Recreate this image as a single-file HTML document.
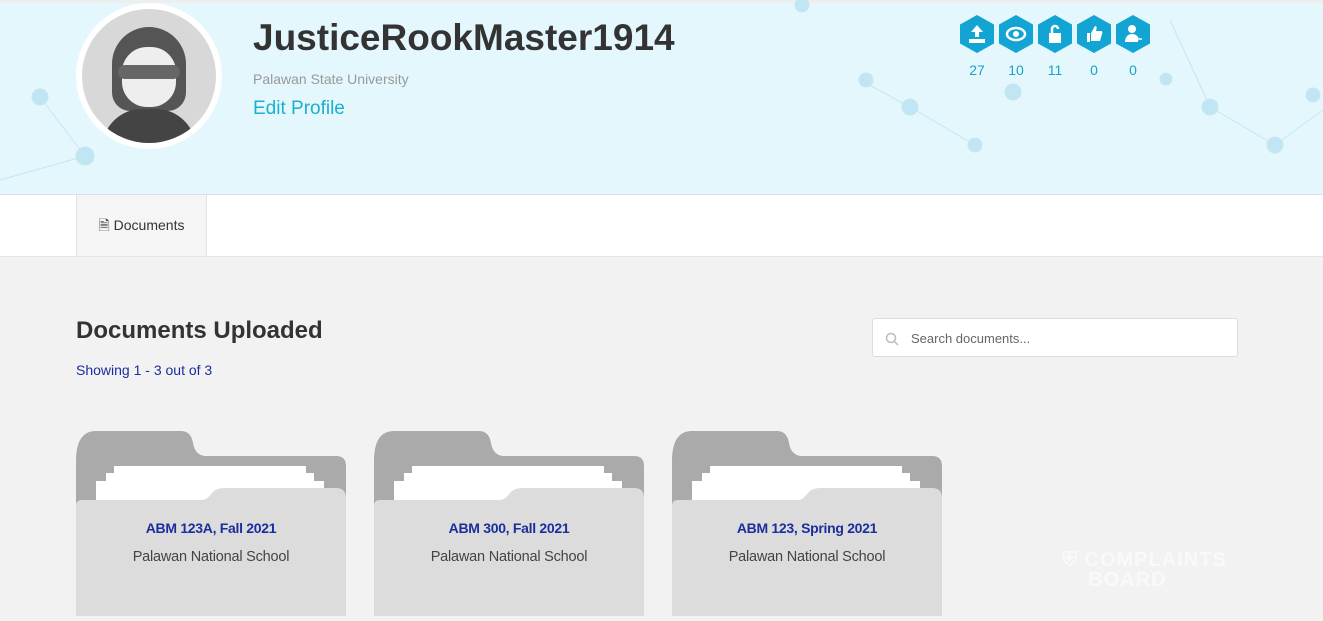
<!DOCTYPE html><html><head><style>
body{margin:0;width:1323px;height:616px;overflow:hidden;background:#f2f2f2;font-family:"Liberation Sans",sans-serif;position:relative}
.hdr{position:absolute;left:0;top:0;width:1323px;height:195px;background:#e4f7fc;border-top:3px solid #eee;box-sizing:border-box;border-bottom:1px solid #dde}
.tabs{position:absolute;top:195px;left:0;width:1323px;height:61px;background:#fff;border-bottom:1px solid #e6e6e6}
.tab{position:absolute;left:76px;top:0;width:129px;height:61px;background:#f5f5f5;border-left:1px solid #e3e3e3;border-right:1px solid #e3e3e3;font-size:14px;color:#333;line-height:61px;text-align:center}
.hex{position:absolute;top:15px;width:34px;height:38px}
.num{position:absolute;top:62px;width:34px;text-align:center;color:#1aa3c8;font-size:14px}
.folder{position:absolute;top:431px;width:270px;height:185px}
.t1{position:absolute;left:0;right:0;top:89px;text-align:center;color:#1a2e9c;font-weight:bold;font-size:14px;letter-spacing:-0.3px}
.t2{position:absolute;left:0;right:0;top:118px;text-align:center;color:#444;font-size:14.5px;letter-spacing:-0.2px}
</style></head><body>
<div class="hdr">
<svg width="1323" height="195" style="position:absolute;left:0;top:-3px" stroke="#c8e6ef" fill="#bfe6f2">
<line x1="40" y1="97" x2="85" y2="156"/><line x1="85" y1="156" x2="0" y2="180"/><line x1="1210" y1="107" x2="1275" y2="145"/><line x1="1275" y1="145" x2="1323" y2="110"/><line x1="1210" y1="107" x2="1170" y2="20"/><line x1="860" y1="80" x2="910" y2="107"/><line x1="910" y1="107" x2="975" y2="145"/>
<circle cx="40" cy="97" r="8"/><circle cx="85" cy="156" r="9"/><circle cx="1210" cy="107" r="8"/><circle cx="1275" cy="145" r="8"/><circle cx="1313" cy="95" r="7"/><circle cx="910" cy="107" r="8"/><circle cx="975" cy="145" r="7"/><circle cx="866" cy="80" r="7"/><circle cx="1013" cy="92" r="8"/><circle cx="1166" cy="79" r="6"/><circle cx="802" cy="5" r="7"/></svg>
<div style="position:absolute;left:76px;top:0px;width:146px;height:146px;border-radius:50%;background:#fff"></div>
<div style="position:absolute;left:82px;top:6px;width:134px;height:134px;border-radius:50%;background:#d8d8d8;overflow:hidden">
<div style="position:absolute;left:30px;top:18px;width:74px;height:84px;border-radius:40px 40px 20px 20px;background:#555"></div>
<div style="position:absolute;left:40px;top:38px;width:54px;height:60px;border-radius:25px;background:#eee"></div>
<div style="position:absolute;left:36px;top:56px;width:62px;height:14px;border-radius:7px;background:#666"></div>
<div style="position:absolute;left:20px;top:100px;width:94px;height:50px;border-radius:40px 40px 0 0;background:#444"></div></div>
<div style="position:absolute;left:253px;top:14px;font-size:37px;font-weight:bold;color:#333">JusticeRookMaster1914</div>
<div style="position:absolute;left:253px;top:68px;font-size:14px;color:#999">Palawan State University</div>
<div style="position:absolute;left:253px;top:95px;font-size:19px;color:#1ab0cf">Edit Profile</div>
</div>
<svg width="0" height="0"><defs><polygon id="h" points="17,0 34,9.5 34,28.5 17,38 0,28.5 0,9.5" fill="#12a4d3"/></defs></svg>
<svg class="hex" style="left:960px"><use href="#h"/><path d="M17 10l-6 7h4v5h4v-5h4zM9 24h16v4H9z" fill="#fff"/></svg>
<svg class="hex" style="left:999px"><use href="#h"/><ellipse cx="17" cy="19" rx="9" ry="6" fill="none" stroke="#fff" stroke-width="2.5"/><circle cx="17" cy="19" r="3" fill="#fff"/></svg>
<svg class="hex" style="left:1038px"><use href="#h"/><rect x="11" y="18" width="12" height="10" fill="#fff"/><path d="M14 18v-4a3 3 0 0 1 6 0" fill="none" stroke="#fff" stroke-width="2.5"/></svg>
<svg class="hex" style="left:1077px"><use href="#h"/><path d="M10 18h3v9h-3zM14 18l4-7c2 0 2 2 1 5h5c1 0 2 1 1 3l-2 7h-9z" fill="#fff"/></svg>
<svg class="hex" style="left:1116px"><use href="#h"/><circle cx="16" cy="14" r="4" fill="#fff"/><path d="M9 27c0-5 3-8 7-8s5 2 6 3v5z" fill="#fff"/><path d="M20 24h6M20 24l2-2M20 24l2 2" stroke="#fff" stroke-width="1.5"/></svg>
<div class="num" style="left:960px">27</div><div class="num" style="left:999px">10</div><div class="num" style="left:1038px">11</div><div class="num" style="left:1077px">0</div><div class="num" style="left:1116px">0</div>
<div class="tabs"><div class="tab">&#128462; Documents</div></div>
<div style="position:absolute;left:76px;top:317px;font-size:24px;font-weight:bold;color:#333">Documents Uploaded</div>
<div style="position:absolute;left:76px;top:362px;font-size:14px;color:#1a2e9c">Showing 1 - 3 out of 3</div>
<div style="position:absolute;left:872px;top:318px;width:366px;height:39px;background:#fff;border:1px solid #ddd;border-radius:3px;font-size:13px;color:#666;line-height:39px;box-sizing:border-box;padding-left:38px">Search documents...
<svg style="position:absolute;left:12px;top:13px" width="14" height="14"><circle cx="6" cy="6" r="4.5" fill="none" stroke="#bbb" stroke-width="1.5"/><path d="M9 9l4 4" stroke="#bbb" stroke-width="1.5"/></svg></div>
<div class="folder" style="left:76px"><svg width="270" height="185"><path d="M0 30q0-30 20-30h85q10 0 12 12t12 13h131q10 0 10 10v150H0z" fill="#aaa"/><rect x="38" y="35" width="192" height="15" fill="#fff"/><rect x="30" y="42" width="208" height="20" fill="#fff"/><rect x="20" y="50" width="228" height="20" fill="#fff"/><path d="M0 75q0-6 6-6h120q5 0 10-7 4-5 12-5h112q10 0 10 10v118H0z" fill="#dcdcdc"/></svg><div class="t1">ABM 123A, Fall 2021</div><div class="t2">Palawan National School</div></div>
<div class="folder" style="left:374px"><svg width="270" height="185"><path d="M0 30q0-30 20-30h85q10 0 12 12t12 13h131q10 0 10 10v150H0z" fill="#aaa"/><rect x="38" y="35" width="192" height="15" fill="#fff"/><rect x="30" y="42" width="208" height="20" fill="#fff"/><rect x="20" y="50" width="228" height="20" fill="#fff"/><path d="M0 75q0-6 6-6h120q5 0 10-7 4-5 12-5h112q10 0 10 10v118H0z" fill="#dcdcdc"/></svg><div class="t1">ABM 300, Fall 2021</div><div class="t2">Palawan National School</div></div>
<div class="folder" style="left:672px"><svg width="270" height="185"><path d="M0 30q0-30 20-30h85q10 0 12 12t12 13h131q10 0 10 10v150H0z" fill="#aaa"/><rect x="38" y="35" width="192" height="15" fill="#fff"/><rect x="30" y="42" width="208" height="20" fill="#fff"/><rect x="20" y="50" width="228" height="20" fill="#fff"/><path d="M0 75q0-6 6-6h120q5 0 10-7 4-5 12-5h112q10 0 10 10v118H0z" fill="#dcdcdc"/></svg><div class="t1">ABM 123, Spring 2021</div><div class="t2">Palawan National School</div></div>
<div style="position:absolute;left:1062px;top:550px;font-size:20px;font-weight:bold;color:#fff;opacity:.6;line-height:20px;letter-spacing:1px">&#9960; COMPLAINTS<br>&nbsp;&nbsp;&nbsp;&nbsp;BOARD</div>
</body></html>
